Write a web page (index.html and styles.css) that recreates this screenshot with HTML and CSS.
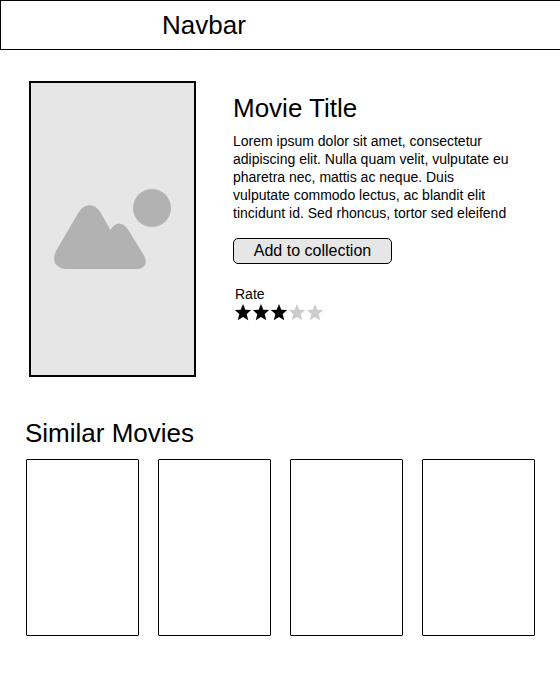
FILE: index.html
```html
<!DOCTYPE html>
<html lang="en">
<head>
<meta charset="utf-8">
<title>Movie Title</title>
<link rel="stylesheet" href="styles.css">
</head>
<body>
<header class="navbar">Navbar</header>
<main>
  <section class="movie">
    <div class="poster">
      <svg class="placeholder" width="120" height="84" viewBox="53 187 120 84" fill="#b2b2b2" aria-hidden="true">
        <circle cx="152" cy="208" r="19"/>
        <path d="M56 251L78.500 212.500Q83 205.200 89.500 205.200Q96 205.200 100.500 212.500L110.500 230Q114 223.500 119 223.500Q124 223.500 128 229.500L144 255.500Q147 261 145 265Q142.500 269 137 269H66Q58 268.500 55 263Q53 257.500 56 251Z"/>
      </svg>
    </div>
    <div class="details">
      <h1 class="title">Movie Title</h1>
      <p class="summary">Lorem ipsum dolor sit amet, consectetur<br>adipiscing elit. Nulla quam velit, vulputate eu<br>pharetra nec, mattis ac neque. Duis<br>vulputate commodo lectus, ac blandit elit<br>tincidunt id. Sed rhoncus, tortor sed eleifend</p>
      <button class="add" type="button">Add to collection</button>
      <div class="rating">
        <div class="rate-label">Rate</div>
        <svg class="stars" width="90" height="18" viewBox="0 0 90 18" aria-hidden="true">
          <defs><path id="star" d="M8 .1L10.300 5.700L16.200 6.100L11.700 10L13.200 16.200L8 12.900L2.800 16.200L4.300 10L-.2 6.100L5.700 5.700Z"/></defs>
          <use href="#star"/>
          <use href="#star" x="18"/>
          <use href="#star" x="36"/>
          <use href="#star" x="54" fill="#ccc"/>
          <use href="#star" x="72" fill="#ccc"/>
        </svg>
      </div>
    </div>
  </section>
  <section class="similar">
    <h2 class="heading">Similar Movies</h2>
    <div class="cards">
      <div class="card"></div>
      <div class="card"></div>
      <div class="card"></div>
      <div class="card"></div>
    </div>
  </section>
</main>
</body>
</html>
```
FILE: styles.css
```css
* { box-sizing: border-box; }
body {
  margin: 0;
  background: #fff;
  color: #000;
  font-family: "Liberation Sans", Arial, sans-serif;
}
.navbar {
  height: 50px;
  padding-left: 161px;
  border: 1px solid #000;
  border-right: 0;
  font-size: 26px;
  line-height: 48px;
}
.movie {
  display: flex;
  gap: 37px;
  padding: 31px 29px 0;
}
.poster {
  display: flex;
  align-items: center;
  justify-content: center;
  width: 167px;
  height: 296px;
  border: 2px solid #000;
  background: #e6e6e6;
}
.placeholder { flex: none; }
.details { padding-top: 12px; white-space: nowrap; }
.title, .heading {
  margin: 0;
  font-size: 26px;
  font-weight: 400;
  line-height: 30px;
}
.summary {
  margin: 9px 0 16px;
  font-size: 14px;
  line-height: 18px;
}
.add {
  display: block;
  width: 159px;
  height: 26px;
  padding: 0;
  border: 1px solid #000;
  border-radius: 5px;
  background: #e6e6e6;
  color: #000;
  font: 16px/24px "Liberation Sans", Arial, sans-serif;
}
.rating { padding: 21px 0 0 2px; }
.rate-label { margin-bottom: 1px; font-size: 14px; line-height: 18px; }
.stars { display: block; overflow: visible; }
.similar { padding: 41px 25px 0; }
.cards {
  display: flex;
  gap: 19px;
  margin: 11px 0 0 1px;
}
.card {
  width: 113px;
  height: 177px;
  border: 1px solid #000;
  border-radius: 1px;
}
```
